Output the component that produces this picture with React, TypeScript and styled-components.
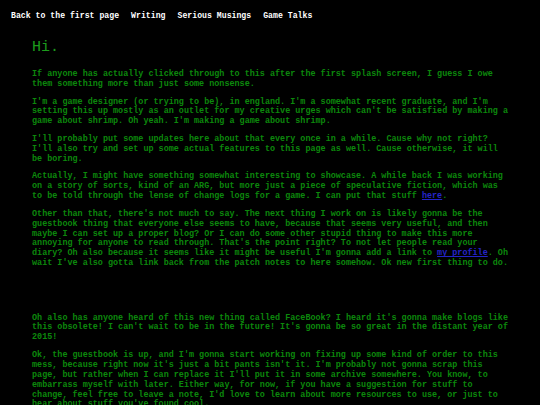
import React from "react";
import styled, { createGlobalStyle } from "styled-components";

const GlobalStyle = createGlobalStyle`
    html, body {
        margin: 0;
        padding: 0;
        background: #000;
    }
`;

const Page = styled.div`
    background: #000;
    min-height: 405px;
    font-family: "Liberation Mono", "Courier New", monospace;
    font-weight: bold;
`;

const NavBar = styled.nav`
    display: flex;
    gap: 12px;
    padding: 11px 11px 0;
    font-size: 8.2px;
    line-height: 10px;
`;

const NavLink = styled.a`
    color: #fff;
    text-decoration: none;
`;

const Main = styled.main`
    width: 480px;
    padding: 0 28px 0 32px;
`;

const Title = styled.h1`
    margin: 18px 0 13px;
    font-size: 15px;
    line-height: 18px;
    font-weight: normal;
    color: #1c9c1c;
`;

const Para = styled.p`
    margin: 7.7px 0;
    font-size: 8.45px;
    line-height: 9.9px;
    color: #0c880c;
`;

const InlineLink = styled.a`
    color: #2424c8;
    text-decoration: underline;
`;

const Spacer = styled.div<{ $h: number }>`
    height: ${(p) => p.$h}px;
`;

const navItems = ["Back to the first page", "Writing", "Serious Musings", "Game Talks"];

export default function App() {
    return (
        <Page>
            <GlobalStyle />
            <NavBar>
                {navItems.map((item) => (
                    <NavLink key={item} href="#">
                        {item}
                    </NavLink>
                ))}
            </NavBar>
            <Main>
                <Title>Hi.</Title>
                <Para>
                    If anyone has actually clicked through to this after the first splash screen, I guess I owe
                    them something more than just some nonsense.
                </Para>
                <Para>
                    I'm a game designer (or trying to be), in england. I'm a somewhat recent graduate, and I'm
                    setting this up mostly as an outlet for my creative urges which can't be satisfied by making a
                    game about shrimp. Oh yeah. I'm making a game about shrimp.
                </Para>
                <Para>
                    I'll probably put some updates here about that every once in a while. Cause why not right?
                    I'll also try and set up some actual features to this page as well. Cause otherwise, it will
                    be boring.
                </Para>
                <Para>
                    Actually, I might have something somewhat interesting to showcase. A while back I was working
                    on a story of sorts, kind of an ARG, but more just a piece of speculative fiction, which was
                    to be told through the lense of change logs for a game. I can put that stuff{" "}
                    <InlineLink href="#">here</InlineLink>.
                </Para>
                <Para>
                    Other than that, there's not much to say. The next thing I work on is likely gonna be the
                    guestbook thing that everyone else seems to have, because that seems very useful, and then
                    maybe I can set up a proper blog? Or I can do some other stupid thing to make this more
                    annoying for anyone to read through. That's the point right? To not let people read your
                    diary? Oh also because it seems like it might be useful I'm gonna add a link to{" "}
                    <InlineLink href="#">my profile</InlineLink>. Oh wait I've also gotta link back from the patch
                    notes to here somehow. Ok new first thing to do.
                </Para>
                <Spacer $h={29} />
                <Para>
                    Oh also has anyone heard of this new thing called FaceBook? I heard it's gonna make blogs like
                    this obsolete! I can't wait to be in the future! It's gonna be so great in the distant year of
                    2015!
                </Para>
                <Para>
                    Ok, the guestbook is up, and I'm gonna start working on fixing up some kind of order to this
                    mess, because right now it's just a bit pants isn't it. I'm probably not gonna scrap this
                    page, but rather when I can replace it I'll put it in some archive somewhere. You know, to
                    embarrass myself with later. Either way, for now, if you have a suggestion for stuff to
                    change, feel free to leave a note, I'd love to learn about more resources to use, or just to
                    hear about stuff you've found cool.
                </Para>
            </Main>
        </Page>
    );
}
